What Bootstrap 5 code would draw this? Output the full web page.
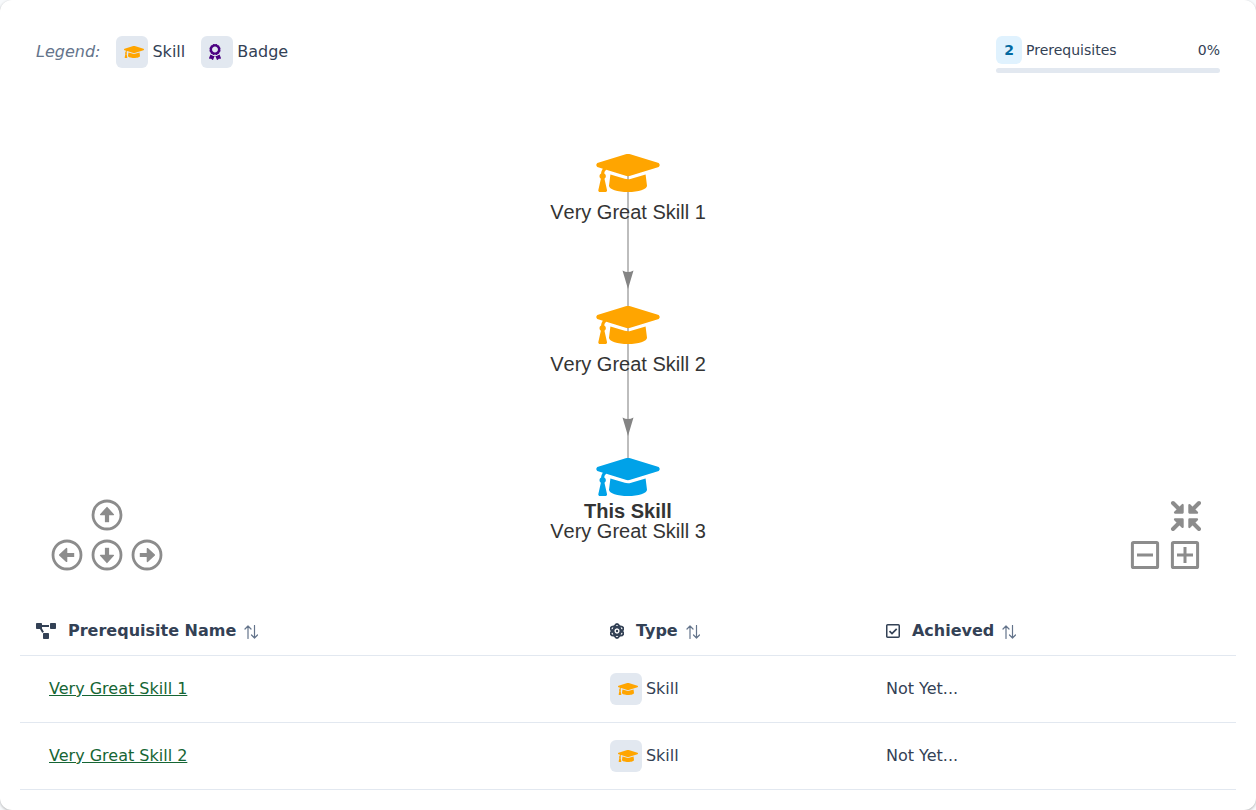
<!DOCTYPE html>
<html lang="en">
<head>
<meta charset="utf-8">
<meta name="viewport" content="width=device-width, initial-scale=1">
<title>Skill Prerequisites</title>
<link href="https://cdn.jsdelivr.net/npm/bootstrap@5.3.0/dist/css/bootstrap.min.css" rel="stylesheet">
<style>
  body { background: #f8fafc; color: #334155; font-family: "DejaVu Sans", sans-serif; }
  .panel { background: #fff; border-radius: 12px; padding: 36px 20px 20px; box-shadow: 0 1px 3px rgba(0,0,0,.3); }
  .muted { color: #64748b; }
  .legend { line-height: 26px; }
  .tile { width: 32px; height: 32px; border-radius: 6px; background: #e2e8f0; }
  .tile-cap { padding-left: 4px; }
  .tile-award { padding-right: 4px; }
  .c-skill { color: orange; }
  .c-badge { color: indigo; }
  .c-this { color: #00a2e8; }
  svg { fill: currentColor; flex: none; }
  .progress-box { width: 224px; font-size: 14px; line-height: 20px; }
  .count { width: 26px; height: 28px; border-radius: 6px; background: #e0f2fe; color: #0369a1; }
  .progress { height: 5px; margin-top: 4px; border-radius: 4px; background: #e2e8f0; }
  .graph { padding: 81px 0 52px; }
  .graph-map text { font: 20px "Liberation Sans", sans-serif; font-kerning: none; fill: #343434; text-anchor: middle; }
  .graph-map .own { font-weight: 700; }
  .pad { display: grid; grid-auto-columns: 32px; grid-auto-rows: 32px; gap: 8px; color: #8c8c8c; bottom: 35px; }
  .pad button { color: inherit; line-height: 0; }
  .pad-move { left: 31px; }
  .pad-zoom { right: 35px; }
  .pad-top { grid-area: 1 / 2; }
  .pad-left { grid-area: 2 / 1; }
  .pad-mid { grid-area: 2 / 2; }
  .pad-right { grid-area: 2 / 3; }
  .col-name { width: 47.2%; }
  .col-type { width: 22.7%; }
  .prereqs { color: #334155; --bs-table-color: #334155; --bs-table-bg: #fff; border-color: #e2e8f0; table-layout: fixed; }
  .prereqs th { padding: 13px 16px 12px; line-height: 24px; }
  .prereqs td { padding: 17px 16px; }
  .prereqs th button { color: #64748b; line-height: 0; margin: 2px 0 0 8px; }
  .prereqs a { color: #166534; margin-left: 13px; }
</style>
</head>
<body>
<svg width="0" height="0" class="position-absolute" aria-hidden="true">
  <symbol id="cap" viewBox="0 64 640 384"><path d="M622.34 153.2L343.4 67.5c-15.2-4.67-31.6-4.67-46.79 0L17.66 153.2c-23.54 7.23-23.54 38.36 0 45.59l48.63 14.94c-10.67 13.19-17.23 29.28-17.88 46.9C38.78 266.15 32 276.11 32 288c0 10.78 5.68 19.85 13.86 25.65L20.33 428.53C18.11 438.52 25.71 448 35.94 448h56.11c10.24 0 17.84-9.48 15.62-19.47L82.14 313.65C90.32 307.85 96 298.78 96 288c0-11.57-6.47-21.25-15.66-26.87.76-15.02 8.44-28.3 20.69-36.72L296.6 284.5c9.06 2.78 26.44 6.25 46.79 0l278.95-85.7c23.55-7.24 23.55-38.36 0-45.6zM352.79 315.09c-28.53 8.76-52.84 3.92-65.59 0l-145.02-44.55L128 384c0 35.35 85.96 64 192 64s192-28.65 192-64l-14.18-113.47-145.03 44.56z"/></symbol>
  <symbol id="award" viewBox="0 0 384 512"><path d="M97.12 362.63c-8.69-8.69-4.16-6.24-25.12-11.85-9.51-2.55-17.87-7.45-25.43-13.32L1.2 448.7c-4.39 10.77 3.81 22.47 15.43 22.03l52.69-2.01L105.56 507c8 8.44 22.04 5.81 26.43-4.96l52.05-127.62c-10.84 6.04-22.87 9.58-35.31 9.58-19.5 0-37.82-7.59-51.61-21.37zM382.8 448.7l-45.37-111.24c-7.56 5.88-15.92 10.77-25.43 13.32-21.07 5.64-16.45 3.18-25.12 11.85-13.79 13.78-32.12 21.37-51.62 21.37-12.44 0-24.47-3.55-35.31-9.58L252 502.04c4.39 10.77 18.44 13.4 26.43 4.96l36.25-38.28 52.69 2.01c11.62.44 19.82-11.27 15.43-22.03zM263 340c15.28-15.55 17.03-14.21 38.79-20.14 13.89-3.79 24.75-14.84 28.47-28.98 7.48-28.4 5.54-24.97 25.95-45.75 10.17-10.35 14.14-25.44 10.42-39.58-7.47-28.38-7.48-24.42 0-52.83 3.72-14.14-.25-29.23-10.42-39.58-20.41-20.78-18.47-17.36-25.95-45.75-3.72-14.14-14.58-25.19-28.47-28.98-27.88-7.61-24.52-5.62-44.95-26.41-10.17-10.35-25-14.4-38.89-10.61-27.87 7.6-23.98 7.61-51.9 0-13.89-3.79-28.72.25-38.89 10.61-20.41 20.78-17.05 18.8-44.94 26.41-13.89 3.79-24.75 14.84-28.47 28.98-7.47 28.39-5.54 24.97-25.95 45.75-10.17 10.35-14.15 25.44-10.42 39.58 7.47 28.36 7.48 24.4 0 52.82-3.72 14.14.25 29.23 10.42 39.59 20.41 20.78 18.47 17.35 25.95 45.75 3.72 14.14 14.58 25.19 28.47 28.98C104.6 325.96 106.27 325 121 340c13.23 13.47 33.84 15.88 49.74 5.82a39.676 39.676 0 0 1 42.53 0c15.89 10.06 36.5 7.65 49.73-5.82zM97.66 175.96c0-53.03 42.24-96.02 94.34-96.02s94.34 42.99 94.34 96.02-42.24 96.02-94.34 96.02-94.34-42.98-94.34-96.02z"/></symbol>
  <symbol id="sort" viewBox="0 0 14 14"><path d="M4 13.5V1M1 4l3-3 3 3M10.5 .5V13M7.5 10l3 3 3-3" fill="none" stroke="currentColor" stroke-width="1.2" stroke-linecap="round" stroke-linejoin="round"/></symbol>
  <symbol id="up" viewBox="0 0 32 32"><circle cx="16" cy="16" r="14" fill="none" stroke="currentColor" stroke-width="2.8"/><path d="M16 8.6L22.4 15.6H9.6z" stroke="currentColor" stroke-width="1.4" stroke-linejoin="round"/><path d="M16 12v11.2" stroke="currentColor" stroke-width="4.2"/></symbol>
</svg>

<main class="panel min-vh-100">
  <header class="d-flex justify-content-between align-items-start px-3">
    <div class="legend d-flex align-items-center gap-3">
      <em class="muted">Legend:</em>
      <span class="d-flex align-items-center gap-1"><span class="tile tile-cap c-skill d-flex align-items-center justify-content-center"><svg width="20" height="12"><use href="#cap"/></svg></span>Skill</span>
      <span class="d-flex align-items-center gap-1"><span class="tile tile-award c-badge d-flex align-items-center justify-content-center"><svg width="12" height="16"><use href="#award"/></svg></span>Badge</span>
    </div>
    <div class="progress-box">
      <div class="d-flex align-items-center gap-1">
        <span class="count fw-bold d-flex align-items-center justify-content-center">2</span>
        <span>Prerequisites</span><span class="ms-auto">0%</span>
      </div>
      <div class="progress" role="progressbar" aria-label="Prerequisites achieved" aria-valuenow="0" aria-valuemin="0" aria-valuemax="100"><div class="progress-bar" style="width:0%"></div></div>
    </div>
  </header>

  <section class="graph position-relative text-center" aria-label="Learning path">
    <svg class="graph-map" width="180" height="400" viewBox="0 0 180 400">
      <path d="M90 20V310" stroke="#bdbdbd" stroke-width="2"/>
      <path id="tip" d="M84.5 116.5Q90 119.5 95.5 116.5L90 135z" fill="#848484"/>
      <use href="#tip" y="147"/>
      <use href="#cap" class="c-skill" x="58" y="0" width="64" height="38"/>
      <text x="90" y="65">Very Great Skill 1</text>
      <use href="#cap" class="c-skill" x="58" y="152" width="64" height="38"/>
      <text x="90" y="217">Very Great Skill 2</text>
      <use href="#cap" class="c-this" x="58" y="304" width="64" height="38"/>
      <text class="own" x="90" y="364">This Skill</text>
      <text x="90" y="384">Very Great Skill 3</text>
    </svg>
    <div class="pad pad-move position-absolute">
      <button class="pad-top btn p-0 border-0" aria-label="Move up"><svg width="32" height="32"><use href="#up"/></svg></button>
      <button class="pad-left btn p-0 border-0" aria-label="Move left"><svg width="32" height="32" viewBox="0 0 32 32"><use href="#up" transform="rotate(-90 16 16)"/></svg></button>
      <button class="pad-mid btn p-0 border-0" aria-label="Move down"><svg width="32" height="32" viewBox="0 0 32 32"><use href="#up" transform="rotate(180 16 16)"/></svg></button>
      <button class="pad-right btn p-0 border-0" aria-label="Move right"><svg width="32" height="32" viewBox="0 0 32 32"><use href="#up" transform="rotate(90 16 16)"/></svg></button>
    </div>
    <div class="pad pad-zoom position-absolute">
      <button class="pad-top btn p-0 border-0" aria-label="Fit"><svg width="32" height="32" viewBox="0 0 32 32"><g id="in2"><g id="in1"><path d="M4 4L11 11" stroke="currentColor" stroke-width="4" stroke-linecap="round"/><path d="M13.6 6V13.6H6z" stroke="currentColor" stroke-width="2.2" stroke-linejoin="round"/></g><use href="#in1" transform="rotate(90 17 17)"/></g><use href="#in2" transform="rotate(180 17 17)"/></svg></button>
      <button class="pad-left btn p-0 border-0" aria-label="Zoom out"><svg width="32" height="32" viewBox="0 0 32 32"><path d="M8 16h16M4.5 3.4h23q1.1 0 1.1 1.1v23q0 1.1-1.1 1.1h-23q-1.1 0-1.1-1.1v-23q0-1.1 1.1-1.1z" fill="none" stroke="currentColor" stroke-width="3"/></svg></button>
      <button class="pad-mid btn p-0 border-0" aria-label="Zoom in"><svg width="32" height="32" viewBox="0 0 32 32"><path d="M8 16h16M16 8v16M4.5 3.4h23q1.1 0 1.1 1.1v23q0 1.1-1.1 1.1h-23q-1.1 0-1.1-1.1v-23q0-1.1 1.1-1.1z" fill="none" stroke="currentColor" stroke-width="3"/></svg></button>
    </div>
  </section>

  <table class="table prereqs align-middle mb-0">
    <thead><tr>
      <th class="col-name" scope="col"><div class="d-flex align-items-center"><svg class="me-2" width="20" height="16" viewBox="0 0 640 512"><path d="M384 320H256c-17.67 0-32 14.33-32 32v128c0 17.67 14.33 32 32 32h128c17.67 0 32-14.33 32-32V352c0-17.67-14.33-32-32-32zM192 32c0-17.67-14.33-32-32-32H32C14.33 0 0 14.33 0 32v128c0 17.67 14.33 32 32 32h95.72l73.16 128.04C211.98 300.98 232.4 288 256 288h.28L192 175.51V128h224V64H192V32zM608 0H480c-17.67 0-32 14.33-32 32v128c0 17.67 14.33 32 32 32h128c17.67 0 32-14.33 32-32V32c0-17.67-14.33-32-32-32z"/></svg><span class="ms-1">Prerequisite Name</span><button class="btn p-0 border-0" aria-label="Sort by name"><svg width="14" height="14"><use href="#sort"/></svg></button></div></th>
      <th class="col-type" scope="col"><div class="d-flex align-items-center"><svg class="me-2" width="14" height="16" viewBox="0 0 14 16"><g fill="none" stroke="currentColor" stroke-width="1.8"><ellipse cx="7" cy="8" rx="3.4" ry="7"/><ellipse cx="7" cy="8" rx="3.4" ry="7" transform="rotate(60 7 8)"/><ellipse cx="7" cy="8" rx="3.4" ry="7" transform="rotate(-60 7 8)"/></g><circle cx="7" cy="8" r="1.2"/></svg><span class="ms-1">Type</span><button class="btn p-0 border-0" aria-label="Sort by type"><svg width="14" height="14"><use href="#sort"/></svg></button></div></th>
      <th scope="col"><div class="d-flex align-items-center"><svg class="me-2" width="14" height="16" viewBox="0 0 14 16"><path d="M1.7 1.75h10.6q.95 0 .95.95v10.6q0 .95-.95.95H1.7q-.95 0-.95-.95V2.7q0-.95.95-.95z" fill="none" stroke="currentColor" stroke-width="1.5"/><path d="M3.5 8.2L6 10.6L10.7 5.8" fill="none" stroke="currentColor" stroke-width="1.7"/></svg><span class="ms-1">Achieved</span><button class="btn p-0 border-0" aria-label="Sort by achieved"><svg width="14" height="14"><use href="#sort"/></svg></button></div></th>
    </tr></thead>
    <tbody>
      <tr><td><a href="#skill1">Very Great Skill 1</a></td><td><span class="d-flex align-items-center gap-1"><span class="tile tile-cap c-skill d-flex align-items-center justify-content-center"><svg width="20" height="12"><use href="#cap"/></svg></span>Skill</span></td><td>Not Yet...</td></tr>
      <tr><td><a href="#skill2">Very Great Skill 2</a></td><td><span class="d-flex align-items-center gap-1"><span class="tile tile-cap c-skill d-flex align-items-center justify-content-center"><svg width="20" height="12"><use href="#cap"/></svg></span>Skill</span></td><td>Not Yet...</td></tr>
    </tbody>
  </table>
</main>
<script src="https://cdn.jsdelivr.net/npm/bootstrap@5.3.0/dist/js/bootstrap.bundle.min.js"></script>
</body>
</html>
